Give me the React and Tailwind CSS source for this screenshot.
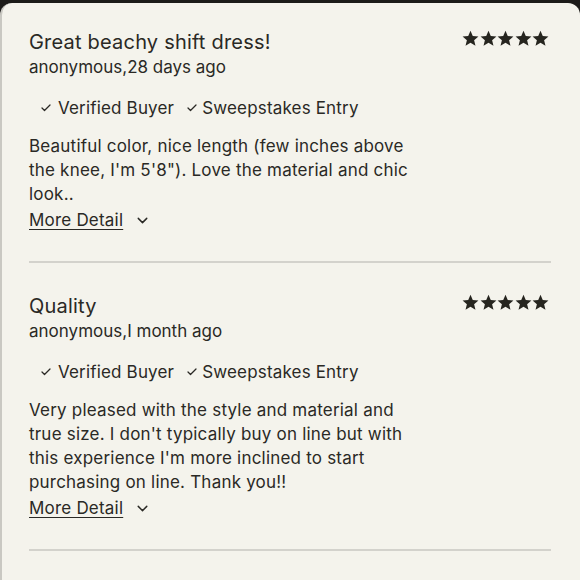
import { ChevronDown, Check } from "lucide-react";

const reviews = [
  {
    title: "Great beachy shift dress!",
    meta: "anonymous,28 days ago",
    body: "Beautiful color, nice length (few inches above the knee, I'm 5'8\"). Love the material and chic look..",
  },
  {
    title: "Quality",
    meta: "anonymous,I month ago",
    body: "Very pleased with the style and material and true size. I don't typically buy on line but with this experience I'm more inclined to start purchasing on line. Thank you!!",
  },
];

const Stars = () => (
  <div className="flex gap-[0.5px] text-[#26251f]">
    {[0, 1, 2, 3, 4].map((i) => (
      <svg key={i} width="17" height="17" viewBox="0 0 24 24" fill="currentColor">
        <path d="M12 1l3.2 7.4 8 .7-6.1 5.3 1.9 7.9L12 18.1l-7 4.2 1.9-7.9L.8 9.1l8-.7z" />
      </svg>
    ))}
  </div>
);

const Review = ({ review, first }) => (
  <div className={`border-b-2 border-[#d3d2cc] pb-[29px] ${first ? "pt-[27px]" : "pt-[31px]"}`}>
    <div className="flex justify-between">
      <div className="w-[405px]">
        <h3 className="text-[20px] leading-[24px] tracking-[0.01em]">{review.title}</h3>
        <p className="mt-[1px] text-[17px] leading-[24px]">{review.meta}</p>
        <div className="mt-[17px] flex items-center pl-[11px] text-[17px] leading-[24px] tracking-[0.01em]">
          <Check size={12} strokeWidth={2.5} className="mr-[6px]" />
          <span>Verified Buyer</span>
          <Check size={12} strokeWidth={2.5} className="ml-[12px] mr-[4px]" />
          <span>Sweepstakes Entry</span>
        </div>
        <p className="mt-[14px] w-[395px] text-[17px] leading-[24px] tracking-[0.012em]">{review.body}</p>
        <button type="button" className="mt-[2px] flex items-center text-[17px] leading-[24px] tracking-[0.012em]">
          <span className="underline underline-offset-[3px]">More Detail</span>
          <ChevronDown size={17} strokeWidth={2} className="ml-[11px]" />
        </button>
      </div>
      <div className="pr-[2px]">
        <Stars />
      </div>
    </div>
  </div>
);

export default function App() {
  return (
    <div className="h-[580px] w-[580px] overflow-hidden bg-[#1c1b19] pt-[3px]">
      <div
        className="h-full rounded-t-[12px] border-l-[2px] border-[#c9c8c2] bg-[#f4f3ec] pl-[27px] pr-[29px] text-[#2a2925]"
        style={{ fontFamily: "Inter, 'Noto Sans', sans-serif" }}
      >
        {reviews.map((r, i) => (
          <Review key={r.title} review={r} first={i === 0} />
        ))}
      </div>
    </div>
  );
}
